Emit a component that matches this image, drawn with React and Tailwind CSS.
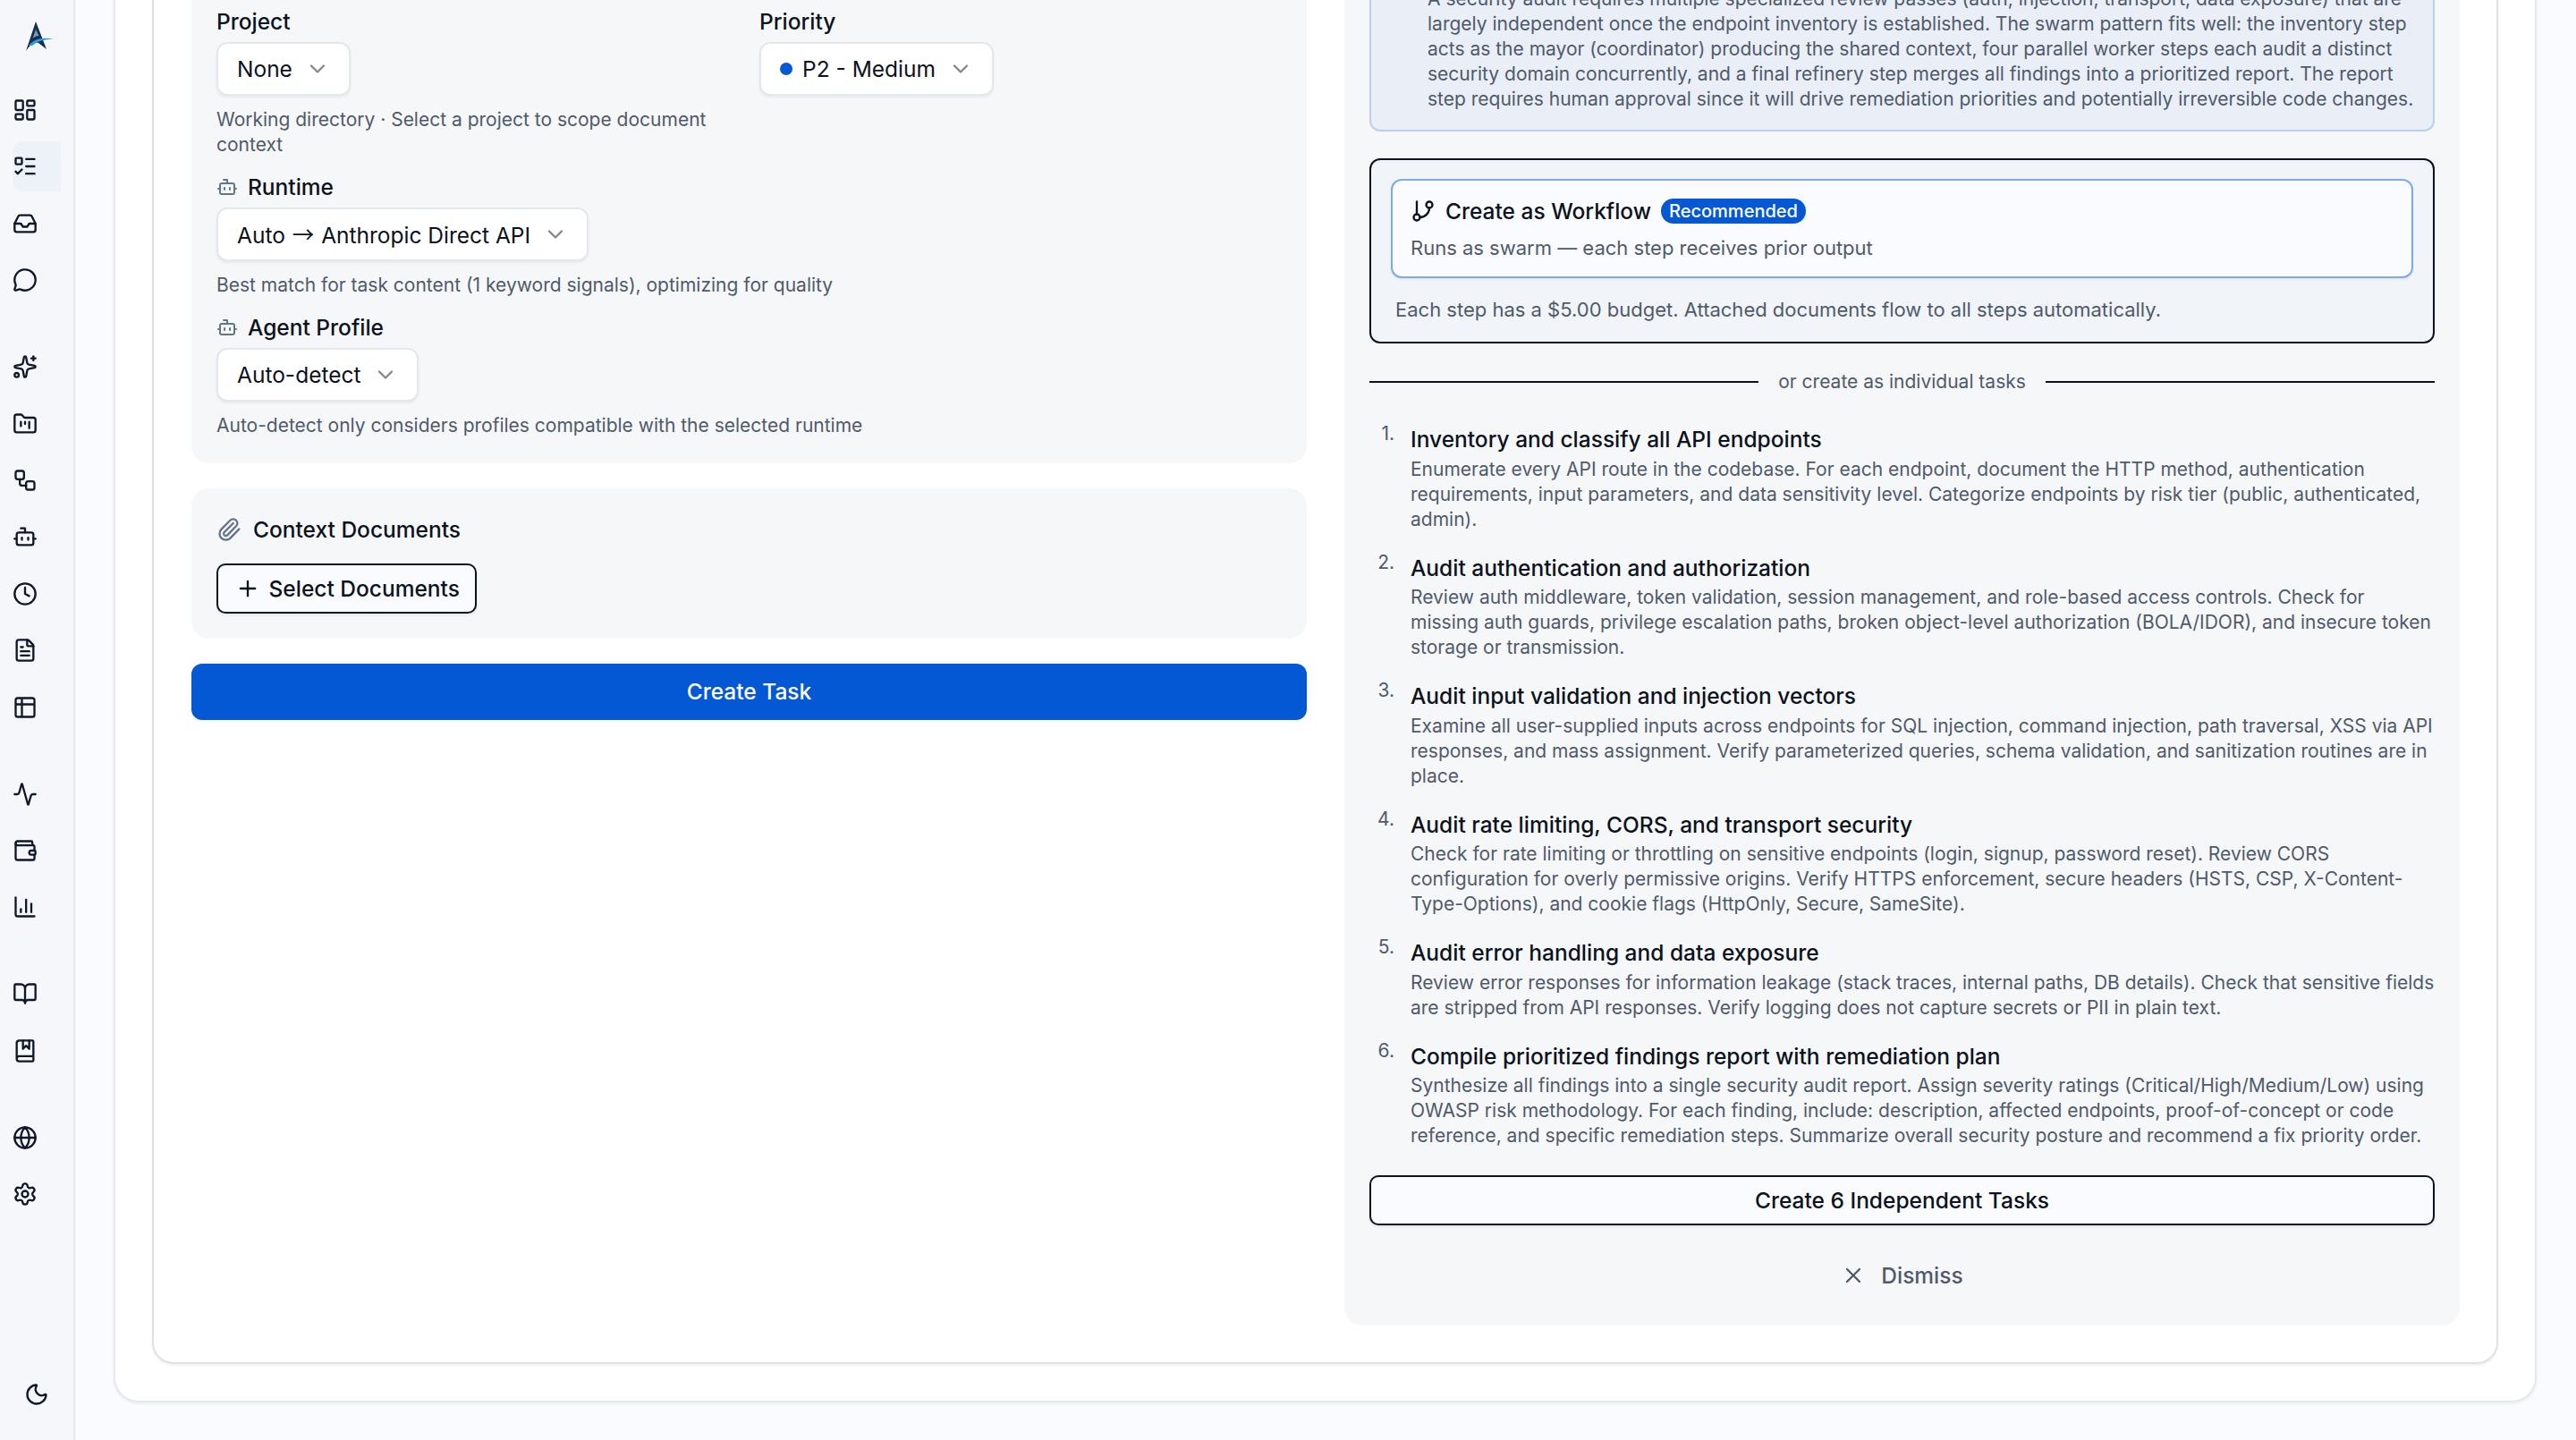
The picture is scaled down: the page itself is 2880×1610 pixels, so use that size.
import React from "react";
import {
  LayoutDashboard, ListTodo, Inbox, MessageCircle, Sparkles, FolderKanban, Workflow, Bot, Clock, FileText,
  Table2, Activity, Wallet, ChartColumn, BookOpen, BookMarked, Globe, Settings, Moon, ChevronDown, Paperclip,
  Plus, GitBranch, X,
} from "lucide-react";

const navGroups = [
  [LayoutDashboard, ListTodo, Inbox, MessageCircle],
  [Sparkles, FolderKanban, Workflow, Bot, Clock, FileText, Table2],
  [Activity, Wallet, ChartColumn],
  [BookOpen, BookMarked],
  [Globe, Settings],
];

const steps = [
  {
    title: "Inventory and classify all API endpoints",
    desc: "Enumerate every API route in the codebase. For each endpoint, document the HTTP method, authentication requirements, input parameters, and data sensitivity level. Categorize endpoints by risk tier (public, authenticated, admin).",
  },
  {
    title: "Audit authentication and authorization",
    desc: "Review auth middleware, token validation, session management, and role-based access controls. Check for missing auth guards, privilege escalation paths, broken object-level authorization (BOLA/IDOR), and insecure token storage or transmission.",
  },
  {
    title: "Audit input validation and injection vectors",
    desc: "Examine all user-supplied inputs across endpoints for SQL injection, command injection, path traversal, XSS via API responses, and mass assignment. Verify parameterized queries, schema validation, and sanitization routines are in place.",
  },
  {
    title: "Audit rate limiting, CORS, and transport security",
    desc: "Check for rate limiting or throttling on sensitive endpoints (login, signup, password reset). Review CORS configuration for overly permissive origins. Verify HTTPS enforcement, secure headers (HSTS, CSP, X-Content-Type-Options), and cookie flags (HttpOnly, Secure, SameSite).",
  },
  {
    title: "Audit error handling and data exposure",
    desc: "Review error responses for information leakage (stack traces, internal paths, DB details). Check that sensitive fields are stripped from API responses. Verify logging does not capture secrets or PII in plain text.",
  },
  {
    title: "Compile prioritized findings report with remediation plan",
    desc: "Synthesize all findings into a single security audit report. Assign severity ratings (Critical/High/Medium/Low) using OWASP risk methodology. For each finding, include: description, affected endpoints, proof-of-concept or code reference, and specific remediation steps. Summarize overall security posture and recommend a fix priority order.",
  },
];

function Logo() {
  return (
    <svg width="50" height="50" viewBox="0 0 50 50" fill="none">
      <path d="M24 10 L36 41 L27 34 C22 32 18 36 13 43 Z" fill="#14324f" />
      <path d="M24 19 L20.5 29 C22.5 27 25 26 27.5 26 Z" fill="#7d99b8" />
      <path d="M16 37 C22 29 32 27 44 30 C34 29.5 26 32 20 37 Z" fill="#2b9be0" />
    </svg>
  );
}

function Sidebar() {
  return (
    <aside className="w-[84px] h-full shrink-0 border-r-2 border-[#e6e8ec] bg-[#f6f7fa] flex flex-col">
      <div className="h-[95px] pt-[14px] flex justify-center shrink-0">
        <Logo />
      </div>
      <nav className="flex flex-col gap-[41px] pl-[14px]">
        {navGroups.map((group, g) => (
          <div key={g} className="flex flex-col gap-[7.4px]">
            {group.map((Icon, i) => (
              <div
                key={i}
                className={`h-[56px] w-[54px] flex items-center rounded-l-[12px] ${
                  g === 0 && i === 1 ? "bg-[#edf1f8]" : ""
                }`}
              >
                <Icon size={28} strokeWidth={2} className="text-[#0f172a]" />
              </div>
            ))}
          </div>
        ))}
      </nav>
      <div className="mt-auto h-[102px] flex items-center justify-center">
        <Moon size={28} strokeWidth={2} className="text-[#0f172a]" />
      </div>
    </aside>
  );
}

function Select({ children }) {
  return (
    <div className="inline-flex h-[60px] items-center gap-[14px] pl-[21px] pr-[21px] rounded-[12px] border-2 border-[#e4e7ec] bg-white shadow-[0_2px_3px_rgba(15,23,42,0.06)] text-[24.5px] leading-[35px] text-[#0b1220]">
      {children}
      <ChevronDown size={28} strokeWidth={2} className="text-[#0b1220] opacity-50" />
    </div>
  );
}

function Hint({ children }) {
  return <p className="mt-[13px] text-[21px] leading-[28px] text-[#4f5a6b]">{children}</p>;
}

function Label({ icon: Icon, children }) {
  return (
    <div className="flex items-center gap-[11px] h-[36px] mb-[5px] text-[24.5px] font-medium text-[#0b1220]">
      {Icon && <Icon size={24} strokeWidth={2} className="text-[#64748b]" />}
      {children}
    </div>
  );
}

function LeftColumn() {
  return (
    <div className="flex flex-col gap-[28px]">
      <section className="bg-[#f6f7f9] rounded-[20px] pt-[71px] pb-[28px] px-[28px] flex flex-col gap-[15px]">
        <div className="grid grid-cols-2 gap-[23px]">
          <div>
            <Label>Project</Label>
            <Select>None</Select>
            <Hint>Working directory · Select a project to scope document context</Hint>
          </div>
          <div>
            <Label>Priority</Label>
            <Select>
              <span className="flex items-center gap-[11px]">
                <span className="w-[14px] h-[14px] rounded-full bg-[#0458d4]" />
                P2 - Medium
              </span>
            </Select>
          </div>
        </div>
        <div>
          <Label icon={Bot}>Runtime</Label>
          <Select>
            <span>
              Auto <span className="mx-[1px] font-['Noto_Sans_CJK_SC']">→</span> Anthropic Direct API
            </span>
          </Select>
          <Hint>Best match for task content (1 keyword signals), optimizing for quality</Hint>
        </div>
        <div>
          <Label icon={Bot}>Agent Profile</Label>
          <Select>Auto-detect</Select>
          <Hint>Auto-detect only considers profiles compatible with the selected runtime</Hint>
        </div>
      </section>
      <section className="bg-[#f6f7f9] rounded-[20px] py-[28px] px-[28px]">
        <div className="flex items-center gap-[13px] h-[36px] mb-[20px] text-[24.5px] font-medium text-[#0b1220]">
          <Paperclip size={28} strokeWidth={2} className="text-[#64748b]" />
          Context Documents
        </div>
        <button className="inline-flex h-[56px] items-center gap-[10px] pl-[18.5px] pr-[17.5px] rounded-[10px] border-2 border-[#0b1220] bg-[#fafbfe] shadow-[0_2px_3px_rgba(15,23,42,0.08)] text-[24.5px] font-medium text-[#0b1220]">
          <Plus size={28} strokeWidth={2} />
          Select Documents
        </button>
      </section>
      <button className="h-[63px] rounded-[12px] bg-[#0458d4] text-white text-[24.5px] font-medium">Create Task</button>
    </div>
  );
}

function RightColumn() {
  return (
    <section className="bg-[#f6f7f9] rounded-[20px] p-[28px] flex flex-col">
      <div className="rounded-[12px] border-2 border-[#b9d1f0] bg-[#e9eef7] pt-[20px] pb-[20px] pl-[63px] pr-[10px] text-[21px] leading-[28px] text-[#4f5a6b]">
        A security audit requires multiple specialized review passes (auth, injection, transport, data exposure) that are
        largely independent once the endpoint inventory is established. The swarm pattern fits well: the inventory step
        acts as the mayor (coordinator) producing the shared context, four parallel worker steps each audit a distinct
        security domain concurrently, and a final refinery step merges all findings into a prioritized report. The report
        step requires human approval since it will drive remediation priorities and potentially irreversible code changes.
      </div>

      <div className="mt-[30px] rounded-[12px] border-2 border-[#0b1220] bg-[#f1f4f8] p-[22px] pt-[21px] pb-[22px]">
        <div className="rounded-[12px] border-2 border-[#7fa9e8] bg-[#fafbfe] pt-[16px] pb-[18px] px-[20px] shadow-[0_2px_3px_rgba(15,23,42,0.06)]">
          <div className="flex items-center h-[36px] text-[24.5px] font-medium text-[#0b1220]">
            <GitBranch size={28} strokeWidth={2} className="mr-[11px]" />
            Create as Workflow
            <span className="ml-[11px] h-[28px] px-[9px] flex items-center rounded-full bg-[#0458d4] text-white text-[20px] font-medium">
              Recommended
            </span>
          </div>
          <p className="mt-[9px] text-[22px] leading-[28px] text-[#4f5a6b]">Runs as swarm — each step receives prior output</p>
        </div>
        <p className="mt-[21px] px-[5px] text-[22px] leading-[28px] text-[#4f5a6b]">
          Each step has a $5.00 budget. Attached documents flow to all steps automatically.
        </p>
      </div>

      <div className="mt-[29px] flex items-center gap-[22px] text-[21px] leading-[28px] text-[#4f5a6b]">
        <div className="flex-1 h-[2px] bg-[#0b1220]" />
        or create as individual tasks
        <div className="flex-1 h-[2px] bg-[#0b1220]" />
      </div>

      <ol className="mt-[33px] -mr-[1px] flex flex-col gap-[23px]">
        {steps.map((s, i) => (
          <li key={i} className="flex">
            <span className="w-[28px] shrink-0 -mt-[3px] mr-[18px] text-right text-[21px] leading-[28px] text-[#4f5a6b]">{i + 1}.</span>
            <div className="min-w-0">
              <div className="text-[24.5px] leading-[35px] font-medium text-[#0b1220]">{s.title}</div>
              <p className="mt-[1.5px] text-[21px] leading-[28px] text-[#4f5a6b]">{s.desc}</p>
            </div>
          </li>
        ))}
      </ol>

      <button className="mt-[30px] h-[56px] rounded-[10px] border-2 border-[#0b1220] bg-[#fafbfe] shadow-[0_2px_3px_rgba(15,23,42,0.08)] text-[24.5px] font-medium text-[#0b1220]">
        Create 6 Independent Tasks
      </button>
      <button className="mt-[28px] h-[56px] flex items-center justify-center gap-[17px] text-[24.5px] font-medium text-[#4f5a6b]">
        <X size={28} strokeWidth={2} />
        Dismiss
      </button>
    </section>
  );
}

export default function App() {
  return (
    <div className="h-[1610px] w-[2880px] overflow-hidden flex bg-[#fafbfe] font-['Inter',sans-serif]">
      <Sidebar />
      <main className="flex-1 flex flex-col justify-end pl-[43px] pr-[44px] pb-[42px]">
        <div className="rounded-b-[28px] bg-white border-2 border-t-0 border-[#e6e8ec] shadow-[0_2px_3px_rgba(15,23,42,0.06)] px-[41px] pb-[41px]">
          <div className="rounded-b-[24px] bg-white border-2 border-t-0 border-[#dfe3e8] shadow-[0_2px_3px_rgba(15,23,42,0.06)] pl-[42px] pr-[41px] pb-[41px]">
            <div className="grid grid-cols-[1247px_1fr] gap-[42px] items-start">
              <LeftColumn />
              <RightColumn />
            </div>
          </div>
        </div>
      </main>
    </div>
  );
}
